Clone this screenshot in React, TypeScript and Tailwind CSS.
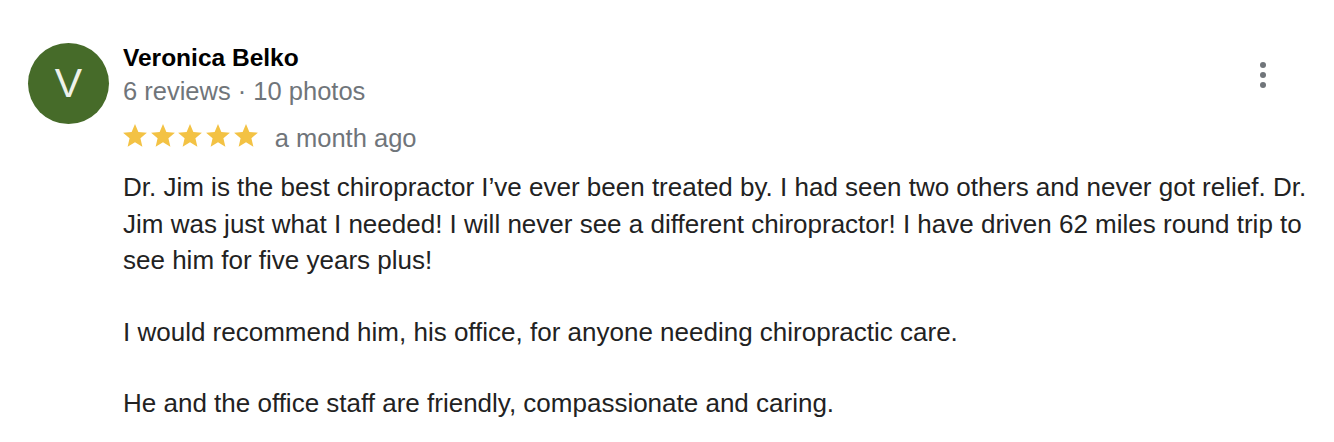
const Star = () => (
  <svg viewBox="2 2 20 19.3" className="h-[23px] w-[24px]" fill="#f3c244">
    <path d="M12 17.27L18.18 21l-1.64-7.03L22 9.24l-7.19-.61L12 2 9.19 8.63 2 9.24l5.46 4.73L5.82 21z" />
  </svg>
)

export default function App() {
  return (
    <div className="flex h-[442px] w-[1334px] bg-white pl-[28px] pr-[20px] pt-[43px] font-['Liberation_Sans',Arial,sans-serif]">
      <div className="flex h-[81px] w-[81px] shrink-0 items-center justify-center rounded-full bg-[#466b29] text-[41px] text-[#eef2ea]">
        V
      </div>
      <div className="ml-[14px] flex-1">
        <div className="flex items-start justify-between">
          <div>
            <div className="text-[24.5px] font-bold leading-[30px] text-black">Veronica Belko</div>
            <div className="text-[25.5px] leading-[36px] text-[#70757a]">6 reviews · 10 photos</div>
          </div>
          <div className="mr-[48px] mt-[19px] flex flex-col gap-[4px]">
            <span className="h-[6px] w-[6px] rounded-full bg-[#70757a]" />
            <span className="h-[6px] w-[6px] rounded-full bg-[#70757a]" />
            <span className="h-[6px] w-[6px] rounded-full bg-[#70757a]" />
          </div>
        </div>
        <div className="mt-[10.5px] flex h-[36px] items-center">
          <div className="mb-[4px] flex gap-[3.7px]">
            <Star />
            <Star />
            <Star />
            <Star />
            <Star />
          </div>
          <span className="ml-[17px] text-[25.5px] leading-[36px] text-[#70757a]">a month ago</span>
        </div>
        <div className="mt-[13.5px] text-[26px] leading-[36.5px] text-[#222222]">
          <p>
            Dr. Jim is the best chiropractor I’ve ever been treated by. I had seen two others and never got relief. Dr.
            Jim was just what I needed! I will never see a different chiropractor! I have driven 62 miles round trip to
            see him for five years plus!
          </p>
          <p className="mt-[35px]">I would recommend him, his office, for anyone needing chiropractic care.</p>
          <p className="mt-[35px]">He and the office staff are friendly, compassionate and caring.</p>
        </div>
      </div>
    </div>
  )
}
